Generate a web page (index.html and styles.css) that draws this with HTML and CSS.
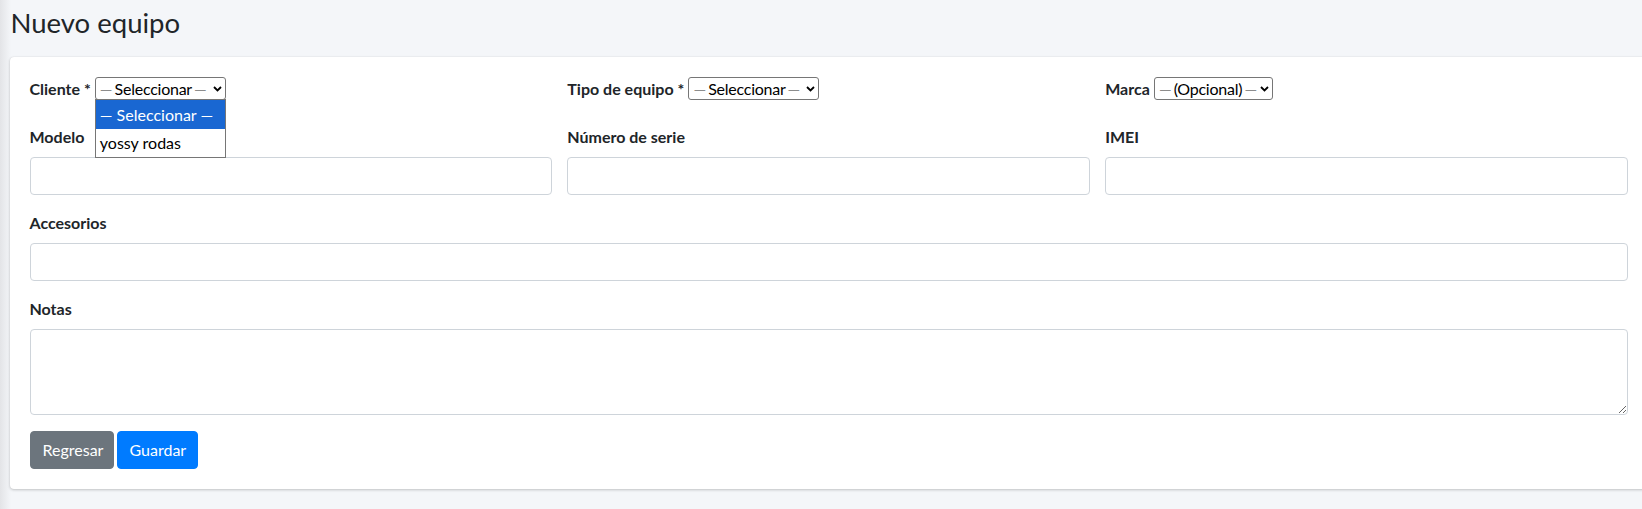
FILE: index.html
```html
<!DOCTYPE html>
<html lang="es">
<head>
<meta charset="utf-8">
<title>Nuevo equipo</title>
<link rel="stylesheet" href="styles.css">
</head>
<body>
<div class="page">
  <header class="content-header">
    <h1>Nuevo equipo</h1>
  </header>
  <section class="content">
    <div class="card">
      <form class="card-body">
        <div class="grid3 first-row">
          <div class="form-group">
            <label>Cliente *</label>
            <div class="fake-select w-cliente">
              <span class="sel-text"><span class="dash">—</span> Seleccionar <span class="dash">—</span></span>
              <svg class="chev" width="9" height="6" viewBox="0 0 9 6"><path d="M1 1 L4.5 4.5 L8 1" fill="none" stroke="#000" stroke-width="1.8"/></svg>
              <div class="dropdown">
                <div class="opt active">— Seleccionar —</div>
                <div class="opt">yossy rodas</div>
              </div>
            </div>
          </div>
          <div class="form-group">
            <label>Tipo de equipo *</label>
            <div class="fake-select w-tipo">
              <span class="sel-text"><span class="dash">—</span> Seleccionar <span class="dash">—</span></span>
              <svg class="chev" width="9" height="6" viewBox="0 0 9 6"><path d="M1 1 L4.5 4.5 L8 1" fill="none" stroke="#000" stroke-width="1.8"/></svg>
            </div>
          </div>
          <div class="form-group">
            <label>Marca</label>
            <div class="fake-select w-marca">
              <span class="sel-text"><span class="dash">—</span> (Opcional) <span class="dash">—</span></span>
              <svg class="chev" width="9" height="6" viewBox="0 0 9 6"><path d="M1 1 L4.5 4.5 L8 1" fill="none" stroke="#000" stroke-width="1.8"/></svg>
            </div>
          </div>
        </div>
        <div class="grid3">
          <div class="form-group">
            <label class="block">Modelo</label>
            <input class="form-control" type="text">
          </div>
          <div class="form-group">
            <label class="block">Número de serie</label>
            <input class="form-control" type="text">
          </div>
          <div class="form-group">
            <label class="block">IMEI</label>
            <input class="form-control" type="text">
          </div>
        </div>
        <div class="form-group">
          <label class="block">Accesorios</label>
          <input class="form-control" type="text">
        </div>
        <div class="form-group">
          <label class="block">Notas</label>
          <textarea class="form-control textarea" rows="3"></textarea>
        </div>
        <div class="actions">
          <button type="button" class="btn btn-secondary">Regresar</button>
          <button type="button" class="btn btn-primary">Guardar</button>
        </div>
      </form>
    </div>
  </section>
</div>
</body>
</html>
```

FILE: styles.css
```css
html, body {
  margin: 0;
  padding: 0;
  overflow: hidden;
}
body {
  font-family: Lato, "Liberation Sans", sans-serif;
  font-size: 16px;
  line-height: 1.5;
  color: #212529;
  background: linear-gradient(90deg, #e3e4e7 0, #f4f6f9 11px) #f4f6f9;
  height: 509px;
}
.page {
  padding-left: 9.5px;
}
.content-header {
  padding: 6px 0 18px 1px;
}
.content-header h1 {
  margin: 0;
  font-size: 27.5px;
  font-weight: 400;
  line-height: 33px;
  color: #212529;
}
.content {
  margin-right: -6px;
}
.card {
  background: #fff;
  border-radius: 4px;
  box-shadow: 0 0 1px rgba(0,0,0,.125), 0 1px 3px rgba(0,0,0,.2);
}
.card-body {
  display: block;
  padding: 20px;
}
.grid3 {
  display: grid;
  grid-template-columns: repeat(3, 1fr);
  column-gap: 15px;
}
.form-group {
  margin-bottom: 16px;
}
label {
  display: inline-block;
  font-weight: 700;
  margin-bottom: 8px;
}
label.block {
  display: block;
}
.fake-select {
  position: relative;
  display: inline-flex;
  align-items: center;
  box-sizing: border-box;
  height: 23px;
  border: 1px solid #767676;
  border-radius: 3px;
  padding: 0 3px 0 4px;
  background: #fff;
  color: #000;
  line-height: 21px;
  white-space: nowrap;
  vertical-align: baseline;
}
.w-cliente { width: 131px; }
.w-tipo { width: 131px; }
.w-marca { width: 119px; }
.sel-text {
  flex: 1 1 auto;
  min-width: 0;
  overflow: hidden;
  letter-spacing: -0.25px;
  word-spacing: -1.5px;
}
.dash {
  color: #8c8c8c;
}
.chev {
  flex: none;
  margin-left: 1px;
}
.dropdown {
  position: absolute;
  top: 100%;
  left: -1px;
  width: calc(100% + 2px);
  box-sizing: border-box;
  border: 1px solid #767676;
  background: #fff;
  z-index: 5;
}
.opt {
  height: 28px;
  line-height: 28px;
  padding: 0 4px;
  color: #000;
}
.opt.active {
  height: 29px;
  line-height: 29px;
  background: #1967d2;
  color: #fff;
}
.form-control {
  display: block;
  width: 100%;
  box-sizing: border-box;
  height: 38px;
  padding: 6px 12px;
  font-family: inherit;
  font-size: 16px;
  line-height: 24px;
  color: #495057;
  background: #fff;
  border: 1px solid #ced4da;
  border-radius: 4px;
  margin: 0;
}
.textarea {
  height: 86px;
  resize: vertical;
}
.actions {
  display: flex;
  gap: 3px;
}
.btn {
  height: 38px;
  box-sizing: border-box;
  padding: 6px 12px;
  font-family: inherit;
  font-size: 16px;
  line-height: 24px;
  border: 1px solid transparent;
  border-radius: 4px;
  color: #fff;
  cursor: pointer;
}
.btn-secondary {
  background: #6c757d;
  border-color: #6c757d;
  width: 84px;
}
.btn-primary {
  background: #007bff;
  border-color: #007bff;
  width: 81px;
}
```
